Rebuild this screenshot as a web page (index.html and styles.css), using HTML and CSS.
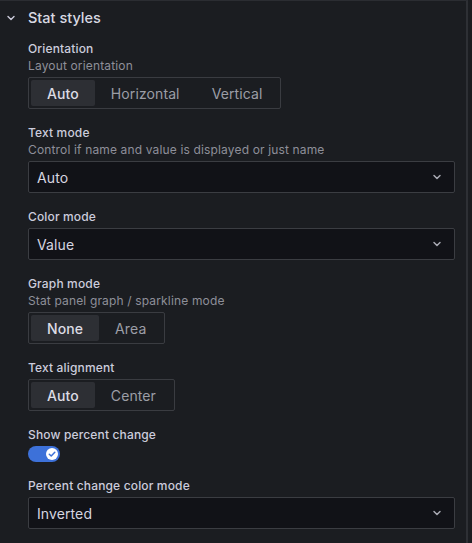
FILE: index.html
```html
<!DOCTYPE html>
<html>
<head>
<meta charset="utf-8">
<link rel="stylesheet" href="styles.css">
</head>
<body>
<div class="pane">
  <div class="cat-header">
    <svg class="cat-chevron" width="10" height="10" viewBox="0 0 10 10"><path d="M2 3.5 L5 6.5 L8 3.5" fill="none" stroke="#ccccdc" stroke-width="1.4" stroke-linecap="round" stroke-linejoin="round"/></svg>
    <span class="cat-title">Stat styles</span>
  </div>
  <div class="cat-body">
    <div class="field">
      <div class="label">Orientation</div>
      <div class="desc">Layout orientation</div>
      <div class="radio-group">
        <span class="radio active">Auto</span>
        <span class="radio">Horizontal</span>
        <span class="radio">Vertical</span>
      </div>
    </div>

    <div class="field">
      <div class="label">Text mode</div>
      <div class="desc">Control if name and value is displayed or just name</div>
      <div class="select">
        <span>Auto</span>
        <svg class="sel-chevron" width="10" height="8" viewBox="0 0 10 8"><path d="M2 2.5 L5 5.5 L8 2.5" fill="none" stroke="#a8a9b2" stroke-width="1.5" stroke-linecap="round" stroke-linejoin="round"/></svg>
      </div>
    </div>

    <div class="field">
      <div class="label nodesc">Color mode</div>
      <div class="select">
        <span>Value</span>
        <svg class="sel-chevron" width="10" height="8" viewBox="0 0 10 8"><path d="M2 2.5 L5 5.5 L8 2.5" fill="none" stroke="#a8a9b2" stroke-width="1.5" stroke-linecap="round" stroke-linejoin="round"/></svg>
      </div>
    </div>

    <div class="field">
      <div class="label">Graph mode</div>
      <div class="desc">Stat panel graph / sparkline mode</div>
      <div class="radio-group">
        <span class="radio active">None</span>
        <span class="radio">Area</span>
      </div>
    </div>

    <div class="field">
      <div class="label nodesc">Text alignment</div>
      <div class="radio-group">
        <span class="radio active">Auto</span>
        <span class="radio">Center</span>
      </div>
    </div>

    <div class="field">
      <div class="label nodesc">Show percent change</div>
      <div class="switch">
        <span class="knob">
          <svg width="12" height="12" viewBox="0 0 12 12"><path d="M3.3 6.2 L5.2 8 L8.8 4.2" fill="none" stroke="#3d71d9" stroke-width="1.5" stroke-linecap="round" stroke-linejoin="round"/></svg>
        </span>
      </div>
    </div>

    <div class="field">
      <div class="label nodesc">Percent change color mode</div>
      <div class="select">
        <span>Inverted</span>
        <svg class="sel-chevron" width="10" height="8" viewBox="0 0 10 8"><path d="M2 2.5 L5 5.5 L8 2.5" fill="none" stroke="#a8a9b2" stroke-width="1.5" stroke-linecap="round" stroke-linejoin="round"/></svg>
      </div>
    </div>
  </div>
</div>
</body>
</html>
```

FILE: styles.css
```css
html, body {
  margin: 0;
  padding: 0;
  background: #1b1d21;
  height: 100%;
}
body {
  font-family: Inter, "Noto Sans", sans-serif;
  color: #ccccdc;
}
.pane {
  width: 468px;
  min-height: 543px;
  box-sizing: border-box;
  border-top: 1px solid #2b2d32;
  border-right: 2px solid #2e3035;
  background: #1b1d21;
}
.cat-header {
  display: flex;
  align-items: center;
  height: 33px;
  padding-left: 6px;
}
.cat-chevron {
  width: 10px;
  height: 10px;
}
.cat-title {
  margin-left: 12px;
  font-size: 14.5px;
  font-weight: 500;
  color: #d8d9e2;
}
.cat-body {
  padding: 7px 0 0 28px;
}
.field {
  margin-bottom: 16px;
}
.label {
  font-size: 12px;
  line-height: 15px;
  font-weight: 500;
  letter-spacing: 0.15px;
  color: #ccccdc;
}
.label.nodesc {
  margin-bottom: 4px;
}
.desc {
  font-size: 12px;
  line-height: 16px;
  letter-spacing: 0.15px;
  margin-top: 2px;
  margin-bottom: 3px;
  color: #8e8f99;
}
.radio-group {
  display: inline-flex;
  box-sizing: border-box;
  height: 32px;
  padding: 2px;
  border: 1px solid #3a3c41;
  border-radius: 2px;
}
.radio {
  display: flex;
  align-items: center;
  padding: 0 16px;
  height: 26px;
  font-size: 14px;
  letter-spacing: 0.1px;
  color: #9c9da6;
  border-radius: 2px;
}
.radio.active {
  background: #2d2f34;
  color: #dcdce4;
  font-weight: 500;
}
.select {
  display: flex;
  align-items: center;
  justify-content: space-between;
  box-sizing: border-box;
  width: 427px;
  height: 32px;
  padding: 0 12px 0 8px;
  background: #111217;
  border: 1px solid #3b3d42;
  border-radius: 2px;
  font-size: 14px;
  letter-spacing: 0.1px;
  color: #d6d6e0;
}
.sel-chevron {
  width: 10px;
  height: 8px;
}
.switch {
  position: relative;
  width: 32px;
  height: 16px;
  border-radius: 8px;
  background: #3d71d9;
}
.knob {
  position: absolute;
  top: 2px;
  right: 2px;
  width: 12px;
  height: 12px;
  border-radius: 50%;
  background: #ffffff;
  display: flex;
}
.knob svg {
  width: 12px;
  height: 12px;
}
```
